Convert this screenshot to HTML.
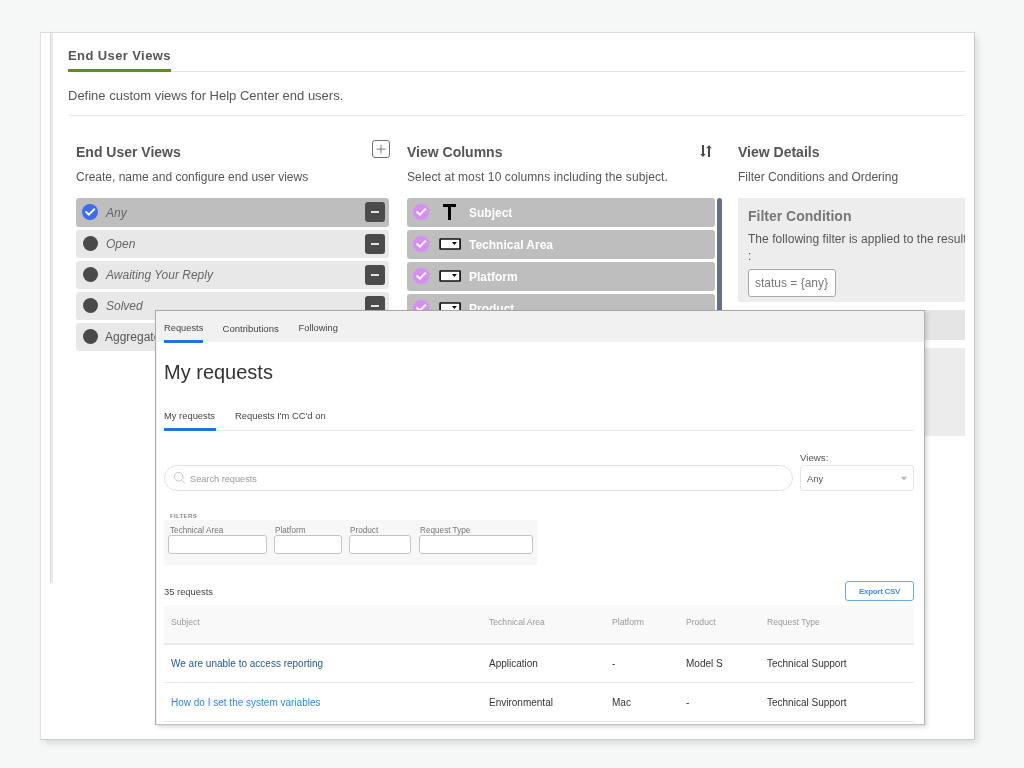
<!DOCTYPE html>
<html><head><meta charset="utf-8">
<style>
html,body{margin:0;padding:0;}
body{will-change:transform;width:1024px;height:768px;overflow:hidden;background:#f6f8f7;font-family:"Liberation Sans",sans-serif;position:relative;}
.a{position:absolute;}
.t{position:absolute;white-space:nowrap;line-height:1;}
.card{left:40px;top:32px;width:933px;height:706px;background:#fff;border:1px solid #c9c9c9;border-top-color:#dcdcdc;border-left-color:#e0e0e0;box-shadow:3px 4px 7px -1px rgba(0,0,0,0.13);}
.row{position:absolute;border-radius:3px;}
.dot{position:absolute;width:16px;height:16px;border-radius:50%;}
.minus{position:absolute;width:20px;height:20px;background:#4b4b4b;border-radius:3px;}
.minus:after{content:"";position:absolute;left:6px;top:9px;width:8px;height:2px;background:#e4e4e4;}
.popup{left:155px;top:310px;width:768px;height:413px;background:#fff;border:1px solid #aeaaaa;border-top-color:#a9a5a5;border-bottom-color:#c4c1c1;border-right-color:#b4b2b2;box-shadow:2px 2px 4px rgba(0,0,0,0.16);overflow:hidden;}
.inp{position:absolute;background:#fff;border:1px solid #c4c4c4;border-radius:3px;box-sizing:border-box;}
</style></head><body>

<div class="a card"></div>
<div class="a" style="left:50px;top:33px;width:1px;height:550px;background:#d9d9d9;"></div>
<div class="a" style="left:51px;top:33px;width:1px;height:550px;background:#f3f3f3;"></div>
<div class="a" style="left:52px;top:33px;width:1px;height:550px;background:#e6e6e6;"></div>

<!-- header -->
<div class="t" style="left:68px;top:49px;font-size:13px;font-weight:bold;color:#555;letter-spacing:0.4px;">End User Views</div>
<div class="a" style="left:68px;top:71px;width:897px;height:1px;background:#e2e2e2;"></div>
<div class="a" style="left:68px;top:69px;width:103px;height:3px;background:#5f9112;"></div>
<div class="t" style="left:68px;top:89px;font-size:13px;color:#555;">Define custom views for Help Center end users.</div>
<div class="a" style="left:68px;top:115px;width:897px;height:1px;background:#e8e8e8;"></div>

<!-- section headings -->
<div class="t" style="left:76px;top:145px;font-size:14px;font-weight:bold;color:#555;">End User Views</div>
<div class="t" style="left:407px;top:145px;font-size:14px;font-weight:bold;color:#555;">View Columns</div>
<div class="t" style="left:738px;top:145px;font-size:14px;font-weight:bold;color:#555;">View Details</div>
<div class="t" style="left:76px;top:171px;font-size:12px;color:#555;">Create, name and configure end user views</div>
<div class="t" style="left:407px;top:171px;font-size:12px;color:#555;letter-spacing:0.1px;">Select at most 10 columns including the subject.</div>
<div class="t" style="left:738px;top:171px;font-size:12px;color:#555;">Filter Conditions and Ordering</div>

<!-- plus icon -->
<svg class="a" style="left:370px;top:138px" width="22" height="22" viewBox="0 0 22 22">
<rect x="2.5" y="2.5" width="17" height="17" rx="2.5" fill="#fff" stroke="#727272" stroke-width="1"/>
<path d="M6.6 11.1 H15.4 M11 6.8 V15.4" stroke="#7a7a7a" stroke-width="1"/>
</svg>
<!-- sort icon -->
<svg class="a" style="left:698px;top:143px" width="16" height="16" viewBox="0 0 16 16">
<rect x="4" y="2" width="2" height="10" fill="#4a4a4a"/>
<path d="M2.2 11 L7.8 11 L5 14 Z" fill="#4a4a4a"/>
<rect x="10" y="5" width="2" height="9" fill="#4a4a4a"/>
<path d="M8.1 5.3 L13.9 5.3 L11 2.2 Z" fill="#4a4a4a"/>
</svg>

<!-- left list -->
<div class="row" style="left:76px;top:198px;width:313px;height:29px;background:#bebebe;"></div>
<div class="row" style="left:76px;top:230px;width:313px;height:28px;background:#e8e8e8;"></div>
<div class="row" style="left:76px;top:261px;width:313px;height:28px;background:#e8e8e8;"></div>
<div class="row" style="left:76px;top:292px;width:313px;height:28px;background:#e8e8e8;"></div>
<div class="row" style="left:76px;top:323px;width:313px;height:28px;background:#e8e8e8;"></div>

<svg class="a" style="left:82px;top:204px" width="16" height="16" viewBox="0 0 16 16"><circle cx="8" cy="8" r="8" fill="#3d6bf3"/><path d="M4.1 8 L6.8 10.7 L12.3 5.2" stroke="#fff" stroke-width="2" stroke-linecap="round" fill="none"/></svg>
<div class="dot" style="left:82.5px;top:236px;width:15px;height:15px;background:#4a4a4a;"></div>
<div class="dot" style="left:82.5px;top:267px;width:15px;height:15px;background:#4a4a4a;"></div>
<div class="dot" style="left:82.5px;top:298px;width:15px;height:15px;background:#4a4a4a;"></div>
<div class="dot" style="left:82.5px;top:329px;width:15px;height:15px;background:#4a4a4a;"></div>

<div class="t" style="left:106px;top:207px;font-size:12px;font-style:italic;color:#666;">Any</div>
<div class="t" style="left:106px;top:238px;font-size:12px;font-style:italic;color:#666;">Open</div>
<div class="t" style="left:106px;top:269px;font-size:12px;font-style:italic;color:#666;">Awaiting Your Reply</div>
<div class="t" style="left:106px;top:300px;font-size:12px;font-style:italic;color:#666;">Solved</div>
<div class="t" style="left:105px;top:331px;font-size:12px;color:#555;">Aggregate</div>

<div class="minus" style="left:365px;top:202px;"></div>
<div class="minus" style="left:365px;top:234px;"></div>
<div class="minus" style="left:365px;top:265px;"></div>
<div class="minus" style="left:365px;top:296px;"></div>

<!-- columns list -->
<div class="row" style="left:407px;top:198px;width:308px;height:29px;background:#bebebe;"></div>
<div class="row" style="left:407px;top:230px;width:308px;height:29px;background:#bebebe;"></div>
<div class="row" style="left:407px;top:262px;width:308px;height:29px;background:#bebebe;"></div>
<div class="row" style="left:407px;top:294px;width:308px;height:29px;background:#bebebe;"></div>
<div class="a" style="left:717px;top:198px;width:5px;height:120px;background:#667089;border-radius:2.5px;"></div>

<svg class="a" style="left:413px;top:204px" width="16" height="16" viewBox="0 0 16 16"><circle cx="8" cy="8" r="8" fill="#d98cf5"/><path d="M4.1 8 L6.8 10.7 L12.3 5.2" stroke="#fff" stroke-width="2" stroke-linecap="round" fill="none"/></svg>
<svg class="a" style="left:413px;top:236px" width="16" height="16" viewBox="0 0 16 16"><circle cx="8" cy="8" r="8" fill="#d98cf5"/><path d="M4.1 8 L6.8 10.7 L12.3 5.2" stroke="#fff" stroke-width="2" stroke-linecap="round" fill="none"/></svg>
<svg class="a" style="left:413px;top:268px" width="16" height="16" viewBox="0 0 16 16"><circle cx="8" cy="8" r="8" fill="#d98cf5"/><path d="M4.1 8 L6.8 10.7 L12.3 5.2" stroke="#fff" stroke-width="2" stroke-linecap="round" fill="none"/></svg>
<svg class="a" style="left:413px;top:300px" width="16" height="16" viewBox="0 0 16 16"><circle cx="8" cy="8" r="8" fill="#d98cf5"/><path d="M4.1 8 L6.8 10.7 L12.3 5.2" stroke="#fff" stroke-width="2" stroke-linecap="round" fill="none"/></svg>

<svg class="a" style="left:442px;top:203px" width="15" height="18" viewBox="0 0 15 18"><path d="M1 1 H14 V4 H9 V17 H6 V4 H1 Z" fill="#000"/></svg>
<svg class="a" style="left:439px;top:238px" width="23" height="13" viewBox="0 0 23 13"><rect x="1.1" y="1" width="20" height="10" fill="#fff" stroke="#111" stroke-width="1.7" rx="0.6"/><path d="M12.9 4 H17.9 L15.4 7.1 Z" fill="#000"/></svg>
<svg class="a" style="left:439px;top:270px" width="23" height="13" viewBox="0 0 23 13"><rect x="1.1" y="1" width="20" height="10" fill="#fff" stroke="#111" stroke-width="1.7" rx="0.6"/><path d="M12.9 4 H17.9 L15.4 7.1 Z" fill="#000"/></svg>
<svg class="a" style="left:439px;top:302px" width="23" height="13" viewBox="0 0 23 13"><rect x="1.1" y="1" width="20" height="10" fill="#fff" stroke="#111" stroke-width="1.7" rx="0.6"/><path d="M12.9 4 H17.9 L15.4 7.1 Z" fill="#000"/></svg>

<div class="t" style="left:469px;top:207px;font-size:12px;font-weight:bold;color:#fff;">Subject</div>
<div class="t" style="left:469px;top:239px;font-size:12px;font-weight:bold;color:#fff;">Technical Area</div>
<div class="t" style="left:469px;top:271px;font-size:12px;font-weight:bold;color:#fff;">Platform</div>
<div class="t" style="left:469px;top:303px;font-size:12px;font-weight:bold;color:#fff;">Product</div>

<!-- view details -->
<div class="a" style="left:738px;top:198px;width:227px;height:104px;background:#ededed;overflow:hidden;">
  <div class="t" style="left:10px;top:11px;font-size:14px;font-weight:bold;color:#777;">Filter Condition</div>
  <div class="t" style="left:10px;top:35px;font-size:12px;color:#555;letter-spacing:0.04px;">The following filter is applied to the results</div>
  <div class="t" style="left:10px;top:52px;font-size:12px;color:#555;">:</div>
  <div class="a" style="left:10px;top:71px;width:88px;height:28px;box-sizing:border-box;background:#fff;border:1px solid #a8a8a8;border-radius:3px;"></div>
  <div class="t" style="left:17px;top:79px;font-size:12px;color:#777;">status = {any}</div>
</div>
<div class="a" style="left:738px;top:310px;width:227px;height:30px;background:#e5e5e5;"></div>
<div class="a" style="left:738px;top:348px;width:227px;height:88px;background:#ececec;"></div>

<!-- popup -->
<div class="a popup"></div>
<div class="a" style="left:156px;top:311px;width:768px;height:31px;background:#f1f1f1;"></div>
<div class="a" style="left:156px;top:342px;width:1px;height:382px;background:#f3f3f3;"></div>
<div class="t" style="left:164px;top:324px;font-size:9.3px;color:#444;">Requests</div>
<div class="t" style="left:222.5px;top:324px;font-size:9.55px;color:#444;">Contributions</div>
<div class="t" style="left:298.6px;top:324px;font-size:9.3px;color:#444;">Following</div>
<div class="a" style="left:164px;top:339.5px;width:39px;height:3px;background:#1f73e6;"></div>
<div class="t" style="left:164px;top:362px;font-size:20px;color:#333;">My requests</div>
<div class="t" style="left:164px;top:411px;font-size:9.4px;color:#444;">My requests</div>
<div class="t" style="left:235px;top:411px;font-size:9.4px;color:#444;">Requests I'm CC'd on</div>
<div class="a" style="left:164px;top:430px;width:750px;height:1px;background:#e9e9e9;"></div>
<div class="a" style="left:164px;top:428px;width:52px;height:3px;background:#1f73e6;"></div>
<div class="t" style="left:800px;top:453.3px;font-size:9.7px;color:#555;">Views:</div>
<div class="a" style="left:164px;top:465px;width:629px;height:26px;box-sizing:border-box;border:1px solid #e2e2e2;border-radius:13px;background:#fff;"></div>
<svg class="a" style="left:172px;top:470px" width="14" height="14" viewBox="0 0 14 14"><circle cx="6.6" cy="6.7" r="4.3" fill="none" stroke="#c8c8c8" stroke-width="1"/><path d="M9.6 9.9 L12.6 13.2" stroke="#c8c8c8" stroke-width="1"/></svg>
<div class="t" style="left:190px;top:475px;font-size:9.2px;color:#999;">Search requests</div>
<div class="a" style="left:800px;top:465px;width:114px;height:26px;box-sizing:border-box;border:1px solid #e4e4e4;border-radius:3px;background:#fff;"></div>
<div class="t" style="left:807px;top:474px;font-size:9.5px;color:#555;">Any</div>
<svg class="a" style="left:900px;top:475.5px" width="8" height="6" viewBox="0 0 8 6"><path d="M0.7 0.7 H7.1 L3.9 4.6 Z" fill="#bbb"/></svg>
<div class="t" style="left:170px;top:512.5px;font-size:6.1px;font-weight:bold;color:#8a8a8a;letter-spacing:0.3px;">FILTERS</div>
<div class="a" style="left:164px;top:520px;width:373px;height:45px;background:#f7f7f7;"></div>
<div class="t" style="left:170px;top:527px;font-size:8.2px;color:#777;">Technical Area</div>
<div class="t" style="left:275px;top:527px;font-size:8.2px;color:#777;">Platform</div>
<div class="t" style="left:350px;top:527px;font-size:8.2px;color:#777;">Product</div>
<div class="t" style="left:420px;top:527px;font-size:8.2px;color:#777;">Request Type</div>
<div class="inp" style="left:168px;top:535px;width:99px;height:19px;"></div>
<div class="inp" style="left:274px;top:535px;width:68px;height:19px;"></div>
<div class="inp" style="left:349px;top:535px;width:62px;height:19px;"></div>
<div class="inp" style="left:419px;top:535px;width:114px;height:19px;"></div>
<div class="t" style="left:164px;top:587px;font-size:9.4px;color:#444;">35 requests</div>
<div class="a" style="left:845px;top:581px;width:69px;height:20px;box-sizing:border-box;border:1px solid #70a8ec;border-radius:3px;background:#fff;"></div>
<div class="t" style="left:859px;top:588px;font-size:8px;font-weight:bold;color:#4a8ee0;-webkit-text-stroke:0;letter-spacing:-0.3px;">Export CSV</div>
<div class="a" style="left:164px;top:605px;width:750px;height:38px;background:#f9f9f9;border-bottom:2px solid #ebebeb;"></div>
<div class="t" style="left:171px;top:618px;font-size:8.6px;color:#999;">Subject</div>
<div class="t" style="left:489px;top:618px;font-size:8.6px;color:#999;">Technical Area</div>
<div class="t" style="left:612px;top:618px;font-size:8.6px;color:#999;">Platform</div>
<div class="t" style="left:686px;top:618px;font-size:8.6px;color:#999;">Product</div>
<div class="t" style="left:767px;top:618px;font-size:8.6px;color:#999;">Request Type</div>
<div class="t" style="left:171px;top:659px;font-size:10px;color:#26589a;">We are unable to access reporting</div>
<div class="t" style="left:489px;top:659px;font-size:10px;color:#333;">Application</div>
<div class="t" style="left:612px;top:659px;font-size:10px;color:#333;">-</div>
<div class="t" style="left:686px;top:659px;font-size:10px;color:#333;">Model S</div>
<div class="t" style="left:767px;top:659px;font-size:10px;color:#333;">Technical Support</div>
<div class="a" style="left:164px;top:682px;width:750px;height:1px;background:#e6e6e6;"></div>
<div class="t" style="left:171px;top:698px;font-size:10px;color:#3386ec;">How do I set the system variables</div>
<div class="t" style="left:489px;top:698px;font-size:10px;color:#333;">Environmental</div>
<div class="t" style="left:612px;top:698px;font-size:10px;color:#333;">Mac</div>
<div class="t" style="left:686px;top:698px;font-size:10px;color:#333;">-</div>
<div class="t" style="left:767px;top:698px;font-size:10px;color:#333;">Technical Support</div>
<div class="a" style="left:164px;top:721px;width:750px;height:1px;background:#e6e6e6;"></div>


</body></html>
